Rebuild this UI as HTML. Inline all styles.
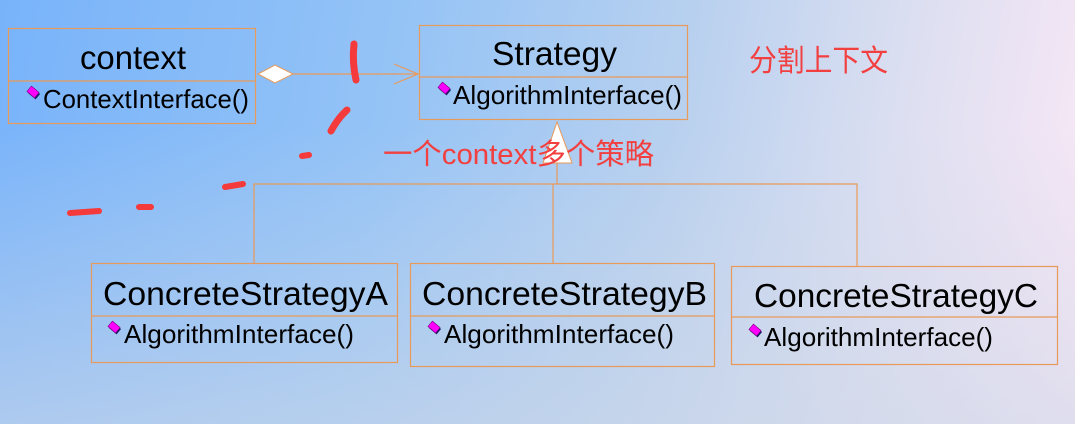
<!DOCTYPE html>
<html><head><meta charset="utf-8"><style>
html,body{margin:0;padding:0}
body{width:1075px;height:424px;overflow:hidden;position:relative;
background:linear-gradient(100deg,#78b3fa 0%,#94c3f6 35%,#b7d0ef 60%,#dcdff1 80%,#fbe8f6 100%);}
.ov{position:absolute;inset:0;background:linear-gradient(to bottom,rgba(200,215,235,0) 30%,rgba(205,215,232,0.6) 100%)}
svg{position:absolute;left:0;top:0}
text{font-family:"Liberation Sans",Arial,sans-serif}
.cj{font-family:"Liberation Sans","Noto Sans CJK SC",sans-serif}
</style></head><body><div class="ov"></div>
<svg width="1075" height="424" viewBox="0 0 1075 424">
<defs>
<g id="ic"><rect x="-5" y="-3.5" width="10" height="7" fill="#1a1a66" transform="translate(1,1.5) rotate(40)"/><rect x="-5" y="-3.5" width="10" height="7" fill="#ff00ff" stroke="#800080" stroke-width="0.6" transform="rotate(40)"/></g>
</defs>
<g fill="none" stroke="#e89a5a" stroke-width="1.2">
<rect x="8.5" y="28.5" width="247" height="95"/><line x1="8" y1="81" x2="256" y2="81"/>
<rect x="419.5" y="25.5" width="268" height="94"/><line x1="419" y1="77" x2="688" y2="77"/>
<rect x="91.5" y="263.5" width="306" height="99"/><line x1="91" y1="316" x2="398" y2="316"/>
<rect x="410.5" y="263.5" width="304" height="103"/><line x1="410" y1="316" x2="715" y2="316"/>
<rect x="731.5" y="266.5" width="326" height="98"/><line x1="731" y1="317" x2="1058" y2="317"/>
<line x1="293" y1="74" x2="418" y2="74"/><polyline points="394,64 418,74 394,84"/>
<line x1="557" y1="163" x2="557" y2="184"/>
<polyline points="254,263 254,184 857,184 857,266"/>
<line x1="553" y1="184" x2="553" y2="263"/>
</g>
<polygon points="258,74 275,65 293,74 275,83" fill="#fff" stroke="#e89a5a"/>
<polygon points="557,122 543,163 572,163" fill="#fff" stroke="#e89a5a"/>
<g fill="#000">
<text x="80" y="69" font-size="33" textLength="106" lengthAdjust="spacingAndGlyphs">context</text>
<text x="43" y="108" font-size="26" textLength="206" lengthAdjust="spacingAndGlyphs">ContextInterface()</text>
<text x="492" y="65" font-size="33" textLength="125" lengthAdjust="spacingAndGlyphs">Strategy</text>
<text x="453" y="104" font-size="26" textLength="229" lengthAdjust="spacingAndGlyphs">AlgorithmInterface()</text>
<text x="103" y="305" font-size="33" textLength="285" lengthAdjust="spacingAndGlyphs">ConcreteStrategyA</text>
<text x="124" y="343" font-size="26" textLength="230" lengthAdjust="spacingAndGlyphs">AlgorithmInterface()</text>
<text x="422" y="305" font-size="33" textLength="285" lengthAdjust="spacingAndGlyphs">ConcreteStrategyB</text>
<text x="444" y="343" font-size="26" textLength="230" lengthAdjust="spacingAndGlyphs">AlgorithmInterface()</text>
<text x="754" y="307" font-size="33" textLength="284" lengthAdjust="spacingAndGlyphs">ConcreteStrategyC</text>
<text x="764" y="346" font-size="26" textLength="229" lengthAdjust="spacingAndGlyphs">AlgorithmInterface()</text>
</g>
<use href="#ic" x="33" y="92"/><use href="#ic" x="444" y="88"/>
<use href="#ic" x="114" y="327"/><use href="#ic" x="434" y="327"/><use href="#ic" x="755" y="330"/>
<text class="cj" x="749" y="71" font-size="30" fill="#f24040" textLength="139" lengthAdjust="spacingAndGlyphs">分割上下文</text>
<text class="cj" x="383" y="164" font-size="29" fill="#f24040" textLength="271" lengthAdjust="spacingAndGlyphs">一个context多个策略</text>
<g stroke="#f43a3a" stroke-linecap="round" fill="none">
<path d="M354 44 Q352 62 356 80" stroke-width="7"/>
<path d="M347 110 Q338 118 331 131" stroke-width="7"/>
<path d="M302 156 L309 155" stroke-width="6"/>
<path d="M225 187 L243 184" stroke-width="6"/>
<path d="M139 207 L151 207" stroke-width="6"/>
<path d="M70 213 L99 211" stroke-width="6"/>
</g>
</svg>
</body></html>
